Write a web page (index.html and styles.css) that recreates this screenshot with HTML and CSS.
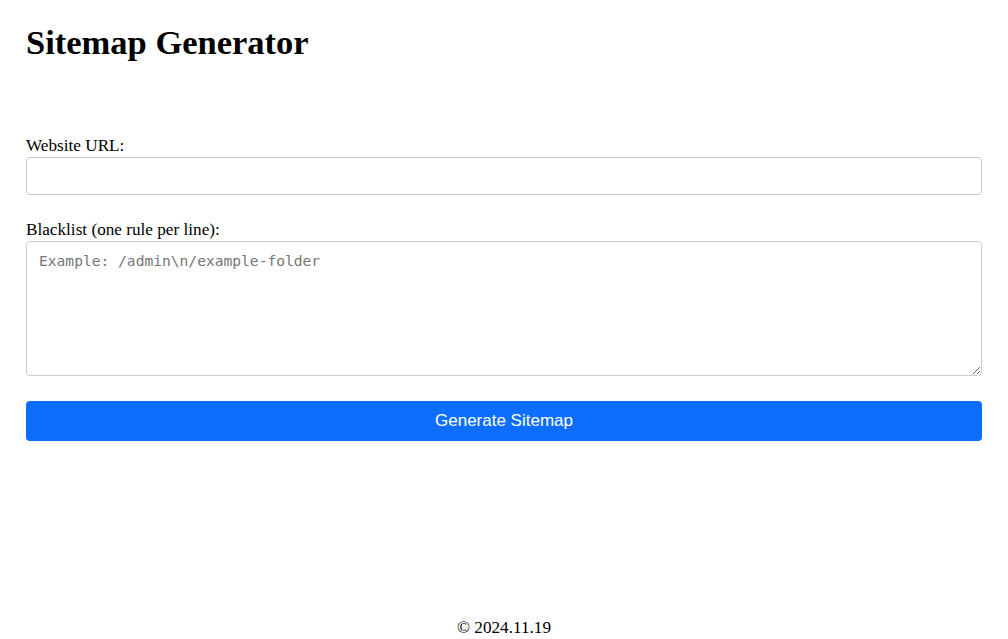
FILE: index.html
```html
<!DOCTYPE html>
<html lang="en">
<head>
<meta charset="utf-8">
<title>Sitemap Generator</title>
<link rel="stylesheet" href="styles.css">
</head>
<body>
<main class="page">
  <h1 class="title">Sitemap Generator</h1>
  <form class="form">
    <div class="group">
      <label class="label" for="url">Website URL:</label>
      <input class="input" id="url" type="text">
    </div>
    <div class="group">
      <label class="label" for="blacklist">Blacklist (one rule per line):</label>
      <textarea class="textarea" id="blacklist" placeholder="Example: /admin\n/example-folder"></textarea>
    </div>
    <button class="button" type="button">Generate Sitemap</button>
  </form>
</main>
<footer class="footer">© 2024.11.19</footer>
</body>
</html>
```

FILE: styles.css
```css
html, body {
  margin: 0;
  padding: 0;
}
body {
  min-height: 100vh;
  display: flex;
  flex-direction: column;
  font-family: "Liberation Serif", "Times New Roman", serif;
  font-size: 17.2px;
  color: #000;
  background: #fff;
}
.page {
  padding: 0 26px;
}
.title {
  margin: 24px 0 0;
  font-size: 34.5px;
  line-height: 37px;
  font-weight: bold;
}
.form {
  margin-top: 76px;
  display: flex;
  flex-direction: column;
}
.group {
  display: flex;
  flex-direction: column;
  margin-bottom: 26px;
}
.group:nth-child(2) {
  margin-bottom: 25px;
}
.label {
  display: block;
  line-height: 18px;
  margin-bottom: 2px;
}
.input,
.textarea {
  box-sizing: border-box;
  width: 100%;
  border: 1px solid #cccccc;
  border-radius: 4px;
  padding: 10px 12px;
  margin: 0;
  font-family: "DejaVu Sans Mono", monospace;
  font-size: 14.6px;
  background: #fff;
  outline: none;
}
.input {
  height: 38px;
}
.textarea {
  display: block;
  height: 135px;
  resize: both;
}
.textarea::placeholder {
  color: #767676;
}
.button {
  box-sizing: border-box;
  width: 100%;
  height: 40px;
  border: none;
  border-radius: 4px;
  background: #0d6efd;
  color: #fff;
  font-family: "Liberation Sans", Arial, sans-serif;
  font-size: 17px;
  cursor: pointer;
}
.footer {
  margin-top: auto;
  text-align: center;
  line-height: 18px;
  padding-bottom: 2px;
}
```
